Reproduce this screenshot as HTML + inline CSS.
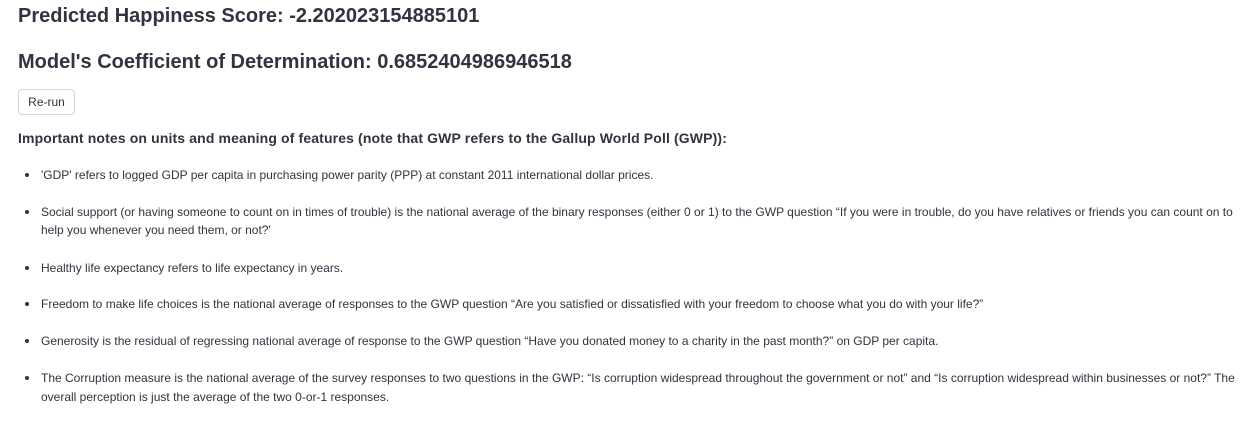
<!DOCTYPE html>
<html><head><style>
body{margin:0;width:1258px;height:421px;background:#fff;color:#31333f;font-family:"Liberation Sans",sans-serif;position:relative;overflow:hidden}
.t{position:absolute;white-space:nowrap;line-height:1}
.h{font-size:20px;font-weight:bold;left:18px}
.s{font-size:14px;font-weight:bold;left:18px;letter-spacing:0.13px}
.l{font-size:12px;left:41px}
.d{position:absolute;left:25px;width:4px;height:4px;border-radius:50%;background:#31333f}
.btn{position:absolute;left:18px;top:89px;width:57px;height:26px;border:1px solid #d6d6d9;border-radius:4px;font-size:12px;display:flex;align-items:center;justify-content:center;box-sizing:border-box}
</style></head><body>
<div class="t h" style="top:6px">Predicted Happiness Score: -2.202023154885101</div>
<div class="t h" style="top:52px">Model's Coefficient of Determination: 0.6852404986946518</div>
<div class="btn">Re-run</div>
<div class="t s" style="top:131px">Important notes on units and meaning of features (note that GWP refers to the Gallup World Poll (GWP)):</div>

<div class="d" style="top:173px"></div>
<div class="t l" style="top:169px">'GDP' refers to logged GDP per capita in purchasing power parity (PPP) at constant 2011 international dollar prices.</div>
<div class="d" style="top:210px"></div>
<div class="t l" style="top:206px">Social support (or having someone to count on in times of trouble) is the national average of the binary responses (either 0 or 1) to the GWP question “If you were in trouble, do you have relatives or friends you can count on to</div>
<div class="t l" style="top:224px">help you whenever you need them, or not?'</div>
<div class="d" style="top:266px"></div>
<div class="t l" style="top:262px">Healthy life expectancy refers to life expectancy in years.</div>
<div class="d" style="top:302px"></div>
<div class="t l" style="top:298px">Freedom to make life choices is the national average of responses to the GWP question “Are you satisfied or dissatisfied with your freedom to choose what you do with your life?”</div>
<div class="d" style="top:339px"></div>
<div class="t l" style="top:335px">Generosity is the residual of regressing national average of response to the GWP question “Have you donated money to a charity in the past month?” on GDP per capita.</div>
<div class="d" style="top:376px"></div>
<div class="t l" style="top:372px">The Corruption measure is the national average of the survey responses to two questions in the GWP: “Is corruption widespread throughout the government or not” and “Is corruption widespread within businesses or not?” The</div>
<div class="t l" style="top:391px">overall perception is just the average of the two 0-or-1 responses.</div>
</body></html>
